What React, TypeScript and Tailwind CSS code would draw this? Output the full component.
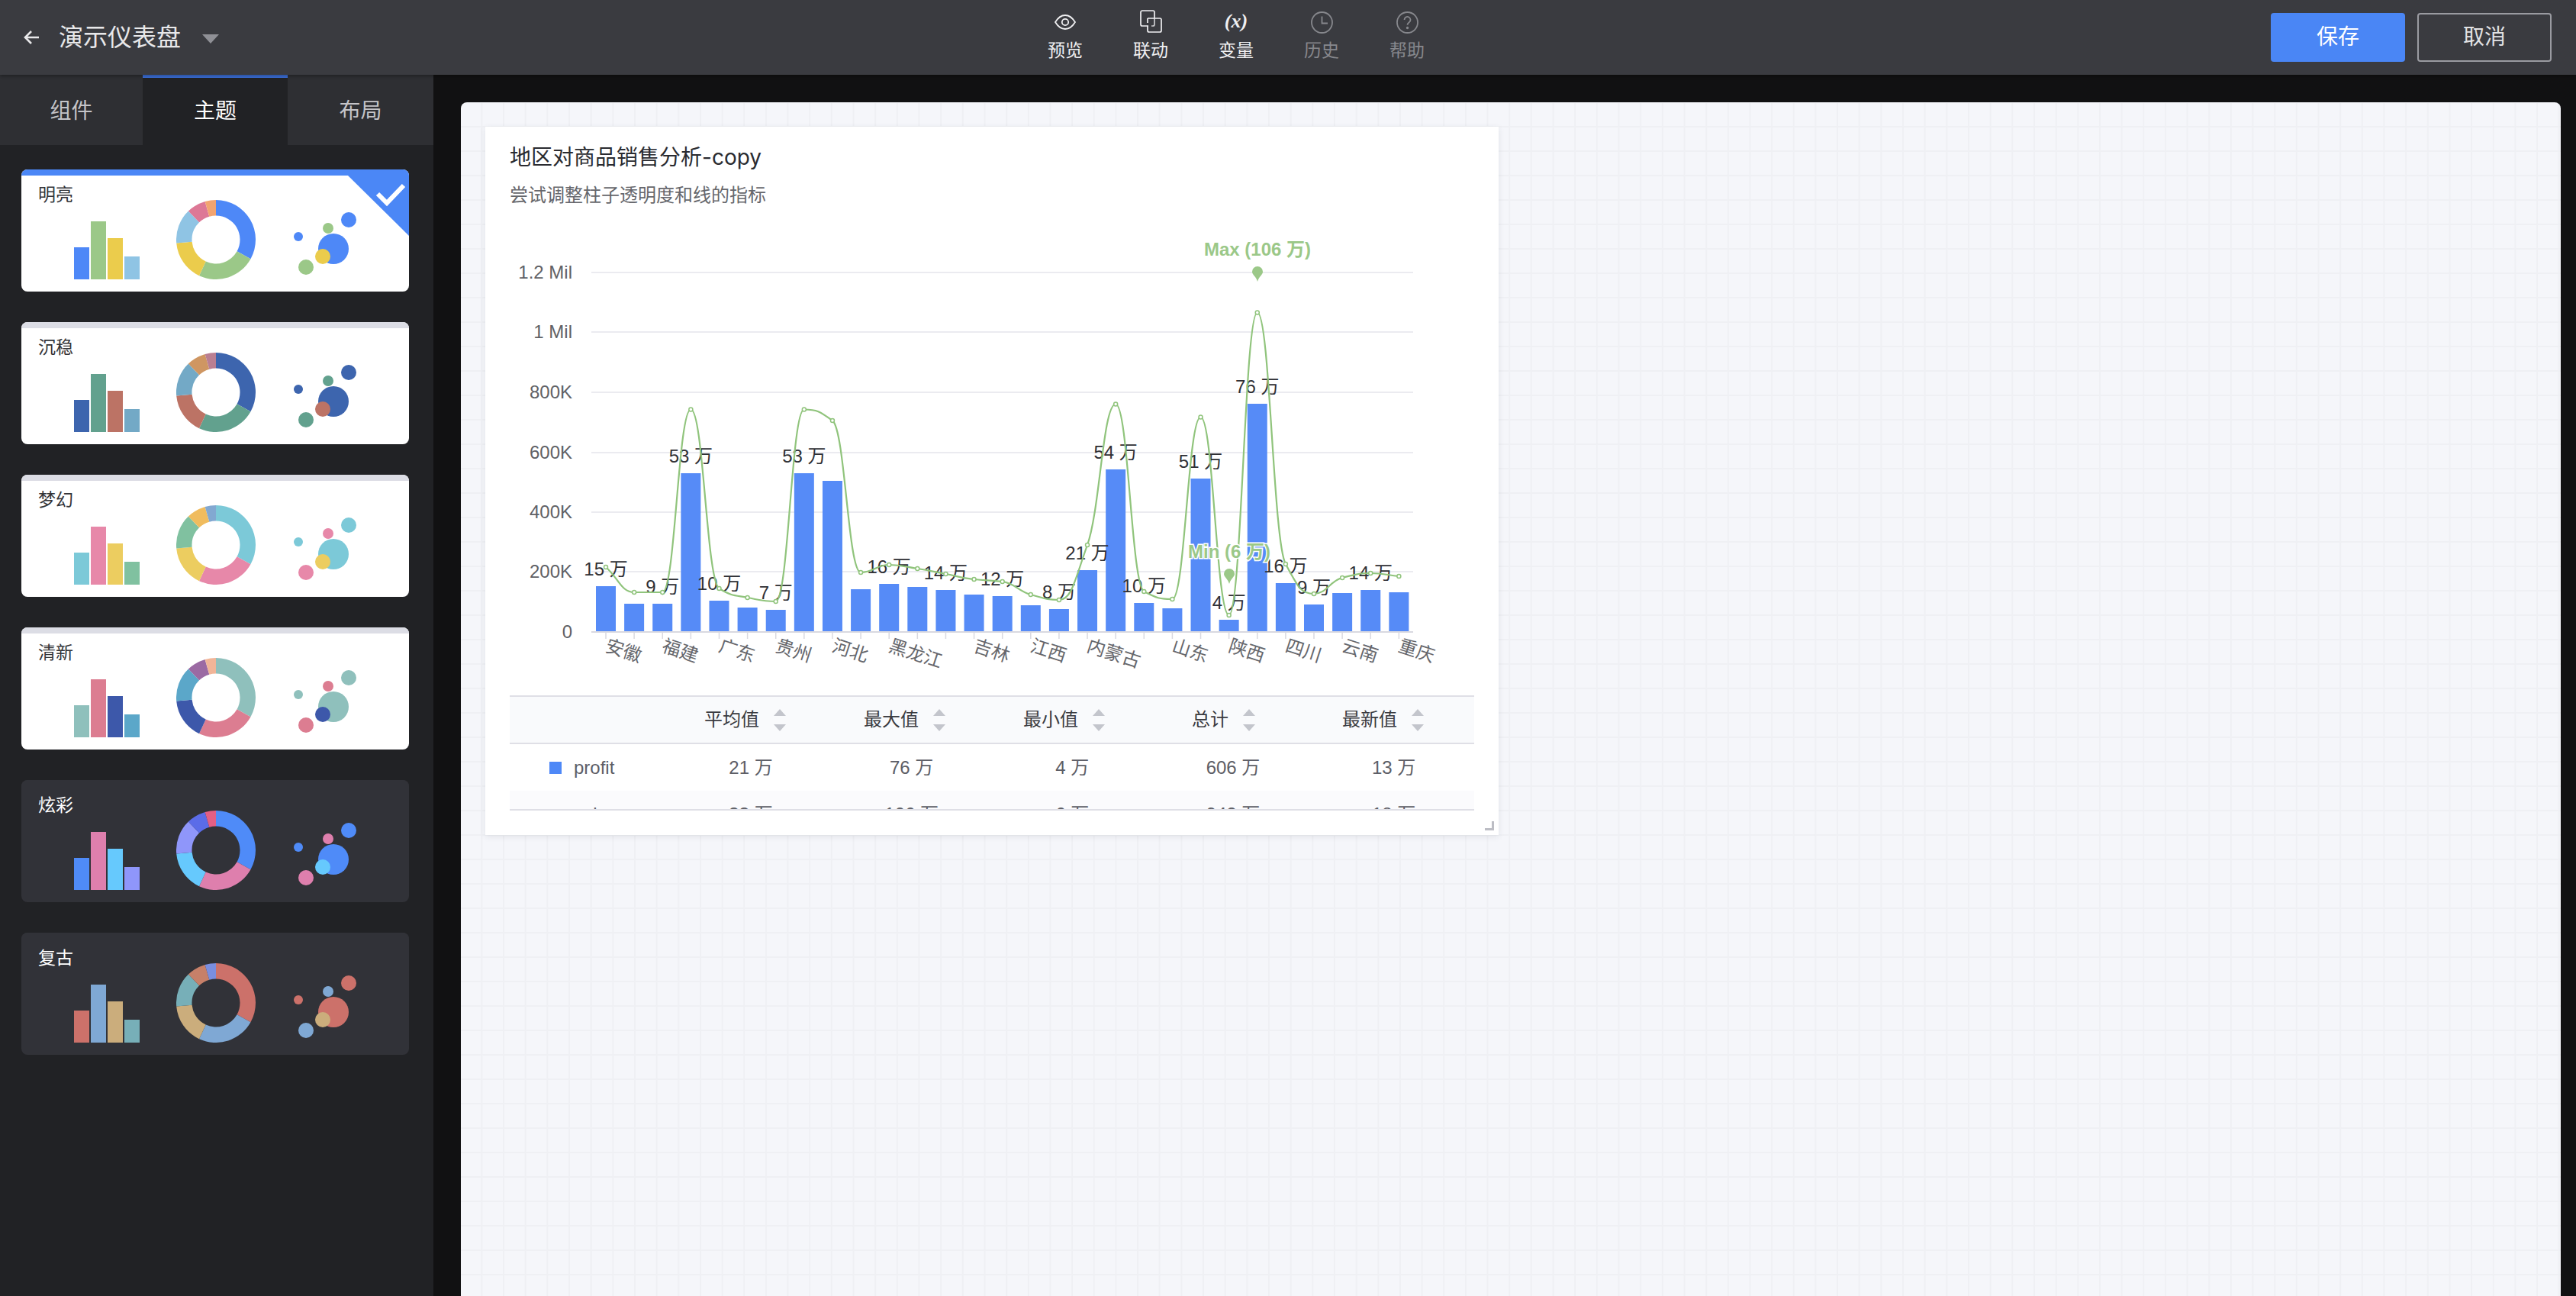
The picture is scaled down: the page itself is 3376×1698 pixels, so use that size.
import type { ReactNode } from "react";

const BASE_FONT = "font-['Liberation_Sans','Noto_Sans_CJK_SC',sans-serif]";

// bar, donut and bubble colours for each theme card
const themes = [
  { name: "明亮", band: "bg-[#4b87f6]", dark: false, checked: true, colors: ["#4e88f7", "#9bc888", "#ebcc4c", "#8fc4e4", "#dd7896", "#f2a470"] },
  { name: "沉稳", band: "bg-[#dcdde5]", dark: false, checked: false, colors: ["#3d65ae", "#62a18e", "#bc7365", "#73a9c6", "#cf9662", "#ba7f92"] },
  { name: "梦幻", band: "bg-[#dcdde5]", dark: false, checked: false, colors: ["#7cc9d8", "#e788a9", "#eccd60", "#80c1a0", "#f0bc5e", "#82a8d1"] },
  { name: "清新", band: "bg-[#dcdde5]", dark: false, checked: false, colors: ["#8fc0bc", "#dc7d91", "#3d58aa", "#5ba7c9", "#9b6aa3", "#f1b598"] },
  { name: "炫彩", band: "bg-[#313238]", dark: true, checked: false, colors: ["#4f8bf8", "#de7fad", "#66c9fd", "#8f96fa", "#5b6ce8", "#e35f85"] },
  { name: "复古", band: "bg-[#313238]", dark: true, checked: false, colors: ["#cc716a", "#7fa8d4", "#cbad7c", "#77afb8", "#c78069", "#7a8ee0"] },
];

const sliceAngles = [0, 119, 205, 265, 316, 344, 360];

function slicePath(a0: number, a1: number) {
  const pt = (r: number, a: number) => {
    const rad = (a * Math.PI) / 180;
    return `${52 + r * Math.sin(rad)} ${52 - r * Math.cos(rad)}`;
  };
  const large = a1 - a0 > 180 ? 1 : 0;
  return `M${pt(52, a0)} A52 52 0 ${large} 1 ${pt(52, a1)} L${pt(31.5, a1)} A31.5 31.5 0 ${large} 0 ${pt(31.5, a0)} Z`;
}

function ThemeCard({ theme }: { theme: (typeof themes)[number] }) {
  const c = theme.colors;
  const heights = [42, 76, 54, 30];
  return (
    <div className={`relative h-[160px] w-[508px] overflow-hidden rounded-lg ${theme.dark ? "bg-[#313238]" : "bg-white"}`}>
      <div className={`h-2 ${theme.band}`} />
      <div className={`mt-[10px] h-[30px] pl-[22px] text-[23px] leading-[30px] ${theme.dark ? "text-white" : "text-[#333438]"}`}>{theme.name}</div>
      <div className="-mt-2 flex h-[104px] pl-[69px]">
        <svg width="86" height="104" viewBox="0 0 86 104" className="shrink-0">
          {heights.map((h, i) => (
            <rect key={i} x={i * 22} y={104 - h} width="20" height={h} fill={c[i]} />
          ))}
        </svg>
        <svg width="104" height="104" viewBox="0 0 104 104" className="ml-12 shrink-0">
          {c.map((color, i) => (
            <path key={i} d={slicePath(sliceAngles[i], sliceAngles[i + 1])} fill={color} />
          ))}
        </svg>
        <svg width="84" height="104" viewBox="0 0 84 104" className="ml-[50px] shrink-0">
          <circle cx="52" cy="64" r="20" fill={c[0]} />
          <circle cx="38" cy="74" r="10" fill={c[2]} />
          <circle cx="16" cy="88" r="10" fill={c[1]} />
          <circle cx="6" cy="48" r="6" fill={c[0]} />
          <circle cx="45" cy="37" r="7" fill={c[1]} />
          <circle cx="72" cy="26" r="10" fill={c[0]} />
        </svg>
      </div>
      {theme.checked && (
        <svg width="80" height="80" viewBox="0 0 80 80" className="absolute right-0 top-2">
          <polygon points="0,0 80,0 80,79" fill="#4b87f6" />
          <polyline points="39,24 51,36 73,13" fill="none" stroke="#fff" strokeWidth="6" />
        </svg>
      )}
    </div>
  );
}

function ToolItem({ label, muted, children }: { label: string; muted?: boolean; children: ReactNode }) {
  return (
    <div className={`flex w-28 flex-col items-center pt-[9px] ${muted ? "text-[#87888d]" : "text-[#f0f0f2]"}`}>
      <div className="flex h-10 items-center justify-center">{children}</div>
      <span className="text-[23px] leading-[34px]">{label}</span>
    </div>
  );
}

function TopBar() {
  return (
    <header className="relative z-10 flex h-[98px] items-center bg-[#3a3b40] shadow-[0_2px_4px_rgba(0,0,0,0.3)]">
      <div className="flex w-[1340px] items-center pl-[31px] text-[#e8e8ea]">
        <svg width="20" height="20" viewBox="0 0 20 20" fill="none" stroke="currentColor" strokeWidth="2.6">
          <path d="M20 10H2M10 2l-8 8 8 8" />
        </svg>
        <span className="ml-[26px] text-[32px] leading-[44px]">演示仪表盘</span>
        <span className="ml-7 mt-1 h-0 w-0 border-x-[11px] border-t-[12px] border-x-transparent border-t-[#8f9096]" />
      </div>
      <nav className="flex h-full">
        <ToolItem label="预览">
          <svg width="28" height="20" viewBox="0 0 28 20" fill="none" stroke="currentColor" strokeWidth="1.8">
            <path d="M1 10C5 3.500 9 1 14 1s9 2.500 13 9c-4 6.500-8 9-13 9S5 16.500 1 10Z" />
            <circle cx="14" cy="10" r="4.200" />
          </svg>
        </ToolItem>
        <ToolItem label="联动">
          <svg width="29" height="30" viewBox="0 0 29 30" fill="none" stroke="currentColor" strokeWidth="1.7" className="-mt-[3px]">
            <path d="M11 21H3a2 2 0 0 1-2-2V3a2 2 0 0 1 2-2h14a2 2 0 0 1 2 2v7" />
            <path d="M19 10v9a2 2 0 0 1-2 2h-2" opacity="0.8" />
            <path d="M10 11h16a2 2 0 0 1 2 2v14a2 2 0 0 1-2 2H12a2 2 0 0 1-2-2v-6" />
            <path d="M10 11v6" />
          </svg>
        </ToolItem>
        <ToolItem label="变量">
          <span className="-mt-[3px] font-['Liberation_Serif',serif] text-[26px] font-bold italic leading-none">(x)</span>
        </ToolItem>
        <ToolItem label="历史" muted>
          <svg width="29" height="29" viewBox="0 0 29 29" fill="none" stroke="currentColor" strokeWidth="1.8">
            <circle cx="14.500" cy="14.500" r="13.500" />
            <path d="M14.500 6.500v9h7.500" />
          </svg>
        </ToolItem>
        <ToolItem label="帮助" muted>
          <svg width="29" height="29" viewBox="0 0 29 29" fill="none" stroke="currentColor" strokeWidth="1.8">
            <circle cx="14.500" cy="14.500" r="13.500" />
            <path d="M10.500 11a4 4 0 1 1 6.200 3.300c-1.400 1-2.200 1.700-2.200 3.400" />
            <circle cx="14.500" cy="21.500" r="0.800" />
          </svg>
        </ToolItem>
      </nav>
      <div className="ml-auto flex gap-4 pr-8">
        <button className="h-16 w-[176px] rounded bg-[#4a86f5] text-[28px] text-white">保存</button>
        <button className="h-16 w-[176px] rounded border-2 border-[#9a9ba1] text-[28px] text-[#e2e2e4]">取消</button>
      </div>
    </header>
  );
}

function Sidebar() {
  const tabs = ["组件", "主题", "布局"];
  return (
    <aside className="flex w-[568px] shrink-0 flex-col bg-[#212225]">
      <div className="grid h-[92px] grid-cols-[187px_190px_191px]">
        {tabs.map((tab, i) => (
          <div
            key={tab}
            className={
              i === 1
                ? "flex items-center justify-center border-t-4 border-[#3c6fd8] bg-[#212225] text-[28px] text-white"
                : "flex items-center justify-center bg-[#2e2f33] pt-1 text-[28px] text-[#c4c4c8]"
            }
          >
            {tab}
          </div>
        ))}
      </div>
      <div className="flex flex-col gap-10 pl-7 pt-8">
        {themes.map((t) => (
          <ThemeCard key={t.name} theme={t} />
        ))}
      </div>
    </aside>
  );
}

// chart data, in page pixels
const barTops = [768, 791, 791, 620, 787, 796, 799, 620, 630, 772, 765, 769, 773, 779, 781, 793, 798, 747, 615, 790, 797, 627, 812, 529, 764, 792, 777, 773, 776];
const linePts = [743, 776, 776, 536.5, 771, 783, 788, 536.5, 551, 750, 740, 745, 752, 759, 762, 779, 786, 714, 529.5, 775, 785, 546.5, 806, 409.5, 739, 778, 757, 751, 755];
const labels: [number, string][] = [
  [0, "15 万"], [2, "9 万"], [3, "53 万"], [4, "10 万"], [6, "7 万"], [7, "53 万"], [10, "16 万"], [12, "14 万"], [14, "12 万"],
  [16, "8 万"], [17, "21 万"], [18, "54 万"], [19, "10 万"], [21, "51 万"], [22, "4 万"], [23, "76 万"], [24, "16 万"], [25, "9 万"], [27, "14 万"],
];
const xLabels: [number, string][] = [
  [0, "安徽"], [2, "福建"], [4, "广东"], [6, "贵州"], [8, "河北"], [10, "黑龙江"], [13, "吉林"], [15, "江西"], [17, "内蒙古"], [20, "山东"], [22, "陕西"], [24, "四川"], [26, "云南"], [28, "重庆"],
];
const yTicks: [number, string][] = [
  [357, "1.2 Mil"], [435, "1 Mil"], [514, "800K"], [593, "600K"], [671, "400K"], [749, "200K"], [828, "0"],
];
const X0 = 794;
const PITCH = 37.12;
const GREEN = "#9bc888";
const LINE_GREEN = "#90c47c";
const xAt = (i: number) => X0 + PITCH * i;

function smoothPath(ys: number[]) {
  const s = ys.slice(1).map((y, i) => (y - ys[i]) / PITCH);
  const m = ys.map((_, i) => {
    if (i === 0) return s[0];
    if (i === ys.length - 1) return s[i - 1];
    const a = s[i - 1];
    const b = s[i];
    return a * b <= 0 ? 0 : (2 * a * b) / (a + b);
  });
  const h = PITCH * 0.45;
  let d = `M${xAt(0)} ${ys[0]}`;
  for (let i = 0; i < ys.length - 1; i++) {
    d += ` C${xAt(i) + h} ${ys[i] + m[i] * h} ${xAt(i + 1) - h} ${ys[i + 1] - m[i + 1] * h} ${xAt(i + 1)} ${ys[i + 1]}`;
  }
  return d;
}

function Pin({ x, y }: { x: number; y: number }) {
  return <path d={`M${x - 7} ${y}a7 7 0 1 1 14 0c0 4-5 6-7 13c-2-7-7-9-7-13Z`} fill={GREEN} />;
}

function Chart() {
  return (
    <svg width="1328" height="631" viewBox="636 280 1328 631" className="mt-[6px] block">
      {yTicks.map(([y, text]) => (
        <g key={text}>
          <line x1="775" x2="1852" y1={y} y2={y} stroke={y === 828 ? "#d9d9e0" : "#ebebf0"} strokeWidth="2" />
          <text x="750" y={y + 8} textAnchor="end" fontSize="24" fill="#606166">{text}</text>
        </g>
      ))}
      {barTops.map((top, i) => (
        <g key={i}>
          <rect x={xAt(i) - 13} y={top} width="26" height={827 - top} fill="#568bf7" />
          <line x1={xAt(i)} x2={xAt(i)} y1="828" y2="837" stroke="#d9d9e0" strokeWidth="1.500" />
        </g>
      ))}
      {labels.map(([i, text]) => (
        <text key={i} x={xAt(i)} y={barTops[i] - 14} textAnchor="middle" fontSize="24" fill="#2f3035">{text}</text>
      ))}
      <path d={smoothPath(linePts)} fill="none" stroke={LINE_GREEN} strokeWidth="2.200" />
      {linePts.map((y, i) => (
        <circle key={i} cx={xAt(i)} cy={y} r="2.500" fill="#fff" stroke={LINE_GREEN} strokeWidth="1.500" />
      ))}
      {xLabels.map(([i, text]) => (
        <text key={i} x={xAt(i) - 2} y="853" fontSize="24" fill="#66676c" transform={`rotate(18 ${xAt(i) - 2} 853)`}>{text}</text>
      ))}
      <Pin x={1648} y={356} />
      <text x="1648" y="335" textAnchor="middle" fontSize="24" fontWeight="700" fill={GREEN}>Max (106 万)</text>
      <Pin x={1611} y={752} />
      <text x="1611" y="731" textAnchor="middle" fontSize="24" fontWeight="700" fill={GREEN} stroke="#fff" strokeWidth="3" paintOrder="stroke">Min (6 万)</text>
    </svg>
  );
}

function SortIcon() {
  return (
    <span className="ml-[19px] flex flex-col gap-[11px]">
      <span className="h-0 w-0 border-x-8 border-b-[9px] border-x-transparent border-b-[#c3c5cc]" />
      <span className="h-0 w-0 border-x-8 border-t-[9px] border-x-transparent border-t-[#c3c5cc]" />
    </span>
  );
}

const columns = ["平均值", "最大值", "最小值", "总计", "最新值"];
const rows = [
  { name: "profit", color: "bg-[#4e88f7]", bg: "bg-white", values: ["21 万", "76 万", "4 万", "606 万", "13 万"] },
  { name: "sales", color: "bg-transparent", bg: "bg-[#fbfbfd]", values: ["33 万", "106 万", "6 万", "942 万", "18 万"] },
];

function StatsTable() {
  return (
    <div className="mx-8 h-[151px] overflow-hidden border-y-2 border-[#dfdfe6]">
      <div className="grid h-[62px] grid-cols-[204px_repeat(5,209px)] border-b-2 border-[#dfdfe6] bg-[#f9fafc] text-[24px] text-[#3a3b40]">
        <div />
        {columns.map((col) => (
          <div key={col} className="flex items-center justify-center">
            {col}
            <SortIcon />
          </div>
        ))}
      </div>
      {rows.map((row) => (
        <div key={row.name} className={`grid h-[61px] grid-cols-6 text-[24px] text-[#5d5e66] ${row.bg}`}>
          <div className="flex items-center pl-[52px]">
            <span className={`h-4 w-4 ${row.color}`} />
            <span className="ml-4">{row.name}</span>
          </div>
          {row.values.map((v, i) => (
            <div key={i} className="flex items-center justify-center">{v}</div>
          ))}
        </div>
      ))}
    </div>
  );
}

function ChartCard() {
  return (
    <div className="relative ml-8 mt-8 h-[928px] w-[1328px] bg-white shadow-[0_2px_8px_rgba(40,45,70,0.1)]">
      <div className="px-8 pt-5">
        <h2 className="font-['Inter','Noto_Sans_CJK_SC',sans-serif] text-[28px] leading-10 text-[#2a2b30]">地区对商品销售分析-copy</h2>
        <p className="mt-3 text-[24px] leading-9 text-[#66676c]">尝试调整柱子透明度和线的指标</p>
      </div>
      <Chart />
      <StatsTable />
      <span className="absolute bottom-[6px] right-[6px] h-3 w-3 border-b-[3px] border-r-[3px] border-[#bcbdc4]" />
    </div>
  );
}

export default function App() {
  return (
    <div className={`flex h-[1698px] w-[3376px] flex-col overflow-hidden bg-[#111112] ${BASE_FONT}`}>
      <TopBar />
      <div className="flex min-h-0 flex-1">
        <Sidebar />
        <main className="min-w-0 flex-1 pl-9 pr-5 pt-9">
          <div className="h-[1600px] overflow-hidden rounded-t-lg bg-[#f5f6fa] bg-[linear-gradient(to_right,#eff0f4_2px,transparent_2px),linear-gradient(to_bottom,#eff0f4_2px,transparent_2px)] bg-[size:28.67px_32px] bg-[position:26.4px_31px]">
            <ChartCard />
          </div>
        </main>
      </div>
    </div>
  );
}
